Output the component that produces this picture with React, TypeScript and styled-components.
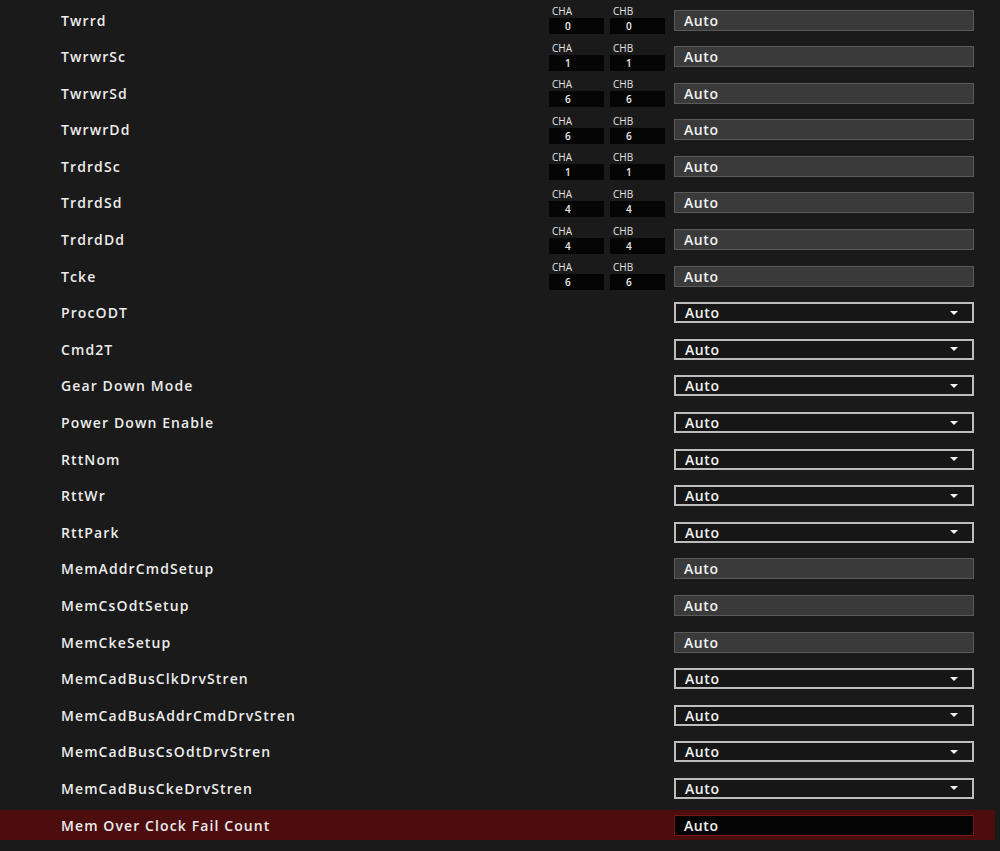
import styled, { createGlobalStyle } from "styled-components";

const GlobalStyle = createGlobalStyle`
  html, body {
    margin: 0;
    padding: 0;
    background: #1a1a1a;
  }
  body {
    font-family: "Open Sans", "DejaVu Sans", sans-serif;
    color: #e8e8e8;
  }
`;

type Kind = "input" | "select" | "active";

type Setting = {
  label: string;
  kind: Kind;
  channels?: [string, string];
};

const settings: Setting[] = [
  { label: "Twrrd", kind: "input", channels: ["0", "0"] },
  { label: "TwrwrSc", kind: "input", channels: ["1", "1"] },
  { label: "TwrwrSd", kind: "input", channels: ["6", "6"] },
  { label: "TwrwrDd", kind: "input", channels: ["6", "6"] },
  { label: "TrdrdSc", kind: "input", channels: ["1", "1"] },
  { label: "TrdrdSd", kind: "input", channels: ["4", "4"] },
  { label: "TrdrdDd", kind: "input", channels: ["4", "4"] },
  { label: "Tcke", kind: "input", channels: ["6", "6"] },
  { label: "ProcODT", kind: "select" },
  { label: "Cmd2T", kind: "select" },
  { label: "Gear Down Mode", kind: "select" },
  { label: "Power Down Enable", kind: "select" },
  { label: "RttNom", kind: "select" },
  { label: "RttWr", kind: "select" },
  { label: "RttPark", kind: "select" },
  { label: "MemAddrCmdSetup", kind: "input" },
  { label: "MemCsOdtSetup", kind: "input" },
  { label: "MemCkeSetup", kind: "input" },
  { label: "MemCadBusClkDrvStren", kind: "select" },
  { label: "MemCadBusAddrCmdDrvStren", kind: "select" },
  { label: "MemCadBusCsOdtDrvStren", kind: "select" },
  { label: "MemCadBusCkeDrvStren", kind: "select" },
  { label: "Mem Over Clock Fail Count", kind: "active" },
];

const App = () => {
  return (
    <>
      <GlobalStyle />
      <Page>
        {settings.map((s) => (
          <Row key={s.label} $active={s.kind === "active"}>
            <Label>{s.label}</Label>
            <Channels>
              {s.channels && (
                <>
                  <Channel>
                    <ChannelName>CHA</ChannelName>
                    <ChannelValue>{s.channels[0]}</ChannelValue>
                  </Channel>
                  <Channel>
                    <ChannelName>CHB</ChannelName>
                    <ChannelValue>{s.channels[1]}</ChannelValue>
                  </Channel>
                </>
              )}
            </Channels>
            <Field $kind={s.kind}>
              <span>Auto</span>
              {s.kind === "select" && <Caret />}
            </Field>
          </Row>
        ))}
      </Page>
    </>
  );
};

const Page = styled.div`
  width: 1000px;
  height: 851px;
  box-sizing: border-box;
  padding-top: 5px;
  display: flex;
  flex-direction: column;
  gap: 6.6px;
  overflow: hidden;
`;

const Row = styled.div<{ $active?: boolean }>`
  flex-shrink: 0;
  height: 30px;
  width: 995px;
  display: flex;
  align-items: center;
  background: ${({ $active }) => ($active ? "#4c0d0e" : "transparent")};
`;

const Label = styled.div`
  width: 488px;
  padding-left: 61px;
  font-size: 14px;
  font-weight: 600;
  letter-spacing: 1.1px;
  color: #ececec;
  white-space: nowrap;
`;

const Channels = styled.div`
  width: 125px;
  display: flex;
  gap: 6px;
  align-self: stretch;
  align-items: flex-start;
`;

const Channel = styled.div`
  width: 55px;
  display: flex;
  flex-direction: column;
`;

const ChannelName = styled.div`
  font-size: 10px;
  line-height: 12px;
  padding-left: 3px;
  color: #e4e4e4;
`;

const ChannelValue = styled.div`
  height: 16px;
  margin-top: 1px;
  background: #050505;
  font-size: 10px;
  font-weight: 600;
  line-height: 16px;
  padding-left: 16px;
  color: #ececec;
`;

const fieldBg: Record<Kind, string> = {
  input: "#3a3a3a",
  select: "#161616",
  active: "#050505",
};

const fieldBorder: Record<Kind, string> = {
  input: "#5a5a5a",
  select: "#bdbdbd",
  active: "#7a1515",
};

const Field = styled.div<{ $kind: Kind }>`
  box-sizing: border-box;
  width: 300px;
  height: 21px;
  display: flex;
  align-items: center;
  justify-content: space-between;
  padding: 0 14px 0 9px;
  background: ${({ $kind }) => fieldBg[$kind]};
  border: ${({ $kind }) => ($kind === "select" ? "2px" : "1px")} solid
    ${({ $kind }) => fieldBorder[$kind]};
  font-size: 14px;
  font-weight: 600;
  letter-spacing: 0.6px;
  color: #f0f0f0;
`;

const Caret = styled.span`
  width: 0;
  height: 0;
  border-left: 4.5px solid transparent;
  border-right: 4.5px solid transparent;
  border-top: 4.5px solid #f4f4f4;
`;

export default App;
